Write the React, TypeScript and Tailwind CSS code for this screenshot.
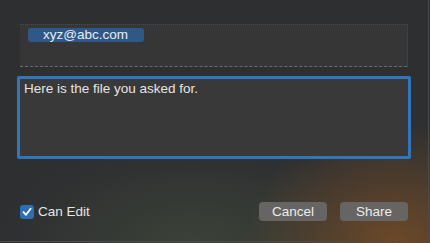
import React from 'react';

const font = { fontFamily: '"Liberation Sans", Arial, sans-serif' };

const App: React.FC = () => {
  return (
    <div
      className="w-[430px] h-[243px] overflow-hidden bg-[radial-gradient(ellipse_35%_50%_at_92%_100%,rgba(125,80,38,0.8),transparent),radial-gradient(ellipse_45%_40%_at_45%_100%,rgba(68,78,60,0.6),transparent),linear-gradient(#2e2f31,#2e2f31)]"
      style={font}
    >
      <div className="w-[429px] h-[242px] border-r border-b border-[#4b4b4b] flex flex-col px-[17px] pt-[24px] pb-[20px]">
        {/* Recipients */}
        <div className="mx-[3px] h-[43px] bg-[#363636] border-t border-r border-dotted border-t-[#4a4a4a] border-r-[#4a4a4a] relative">
          <div className="absolute left-0 right-0 bottom-0 border-b border-dashed border-[#6a6a6a]" />
          <div className="ml-[8px] mt-[3px] w-[116px] h-[14px] rounded-[3px] bg-[#2f5888] flex items-center pl-[15px] text-[13.5px] leading-none text-[#e8ecf2]">
            xyz@abc.com
          </div>
        </div>

        {/* Message */}
        <div className="mt-[9px] h-[83px] border-[3px] border-[#3176ba] rounded-[2px] bg-[#393939] pl-[4px] pt-[2px] text-[13.5px] leading-[16px] text-[#e4e4e4]">
          Here is the file you asked for.
        </div>

        {/* Footer */}
        <div className="mt-auto flex items-center pl-[3px] pr-[3px]">
          <div className="flex items-center gap-[4px]">
            <div className="w-[14px] h-[14px] rounded-[3px] bg-[#2e6fb2] flex items-center justify-center">
              <svg width="10" height="10" viewBox="0 0 10 10" fill="none">
                <path d="M1.5 5.2 L4 7.8 L8.6 1.8" stroke="#fff" strokeWidth="1.8" strokeLinecap="round" strokeLinejoin="round" />
              </svg>
            </div>
            <span className="text-[13.5px] leading-none text-[#e6e6e6]">Can Edit</span>
          </div>
          <div className="ml-auto flex items-center gap-[13px]">
            <button className="w-[68px] h-[19px] rounded-[4px] bg-[#666564] text-[13.5px] leading-none text-[#ececec]">
              Cancel
            </button>
            <button className="w-[68px] h-[19px] rounded-[4px] bg-[#666564] text-[13.5px] leading-none text-[#ececec]">
              Share
            </button>
          </div>
        </div>
      </div>
    </div>
  );
};

export default App;
